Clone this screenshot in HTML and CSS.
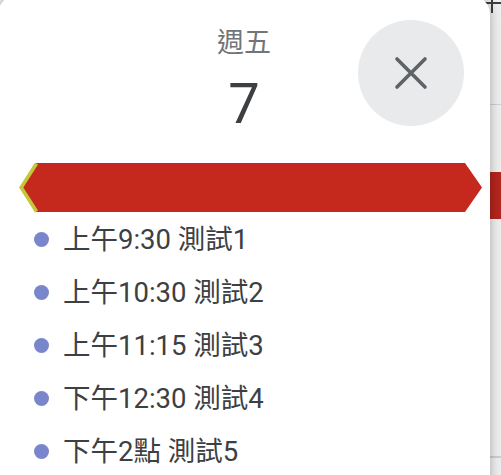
FILE: index.html
```html
<!DOCTYPE html>
<html lang="zh-Hant">
<head>
<meta charset="utf-8">
<link rel="stylesheet" href="styles.css">
</head>
<body>
<div class="backdrop">
  <div class="bd-head">
    <svg class="bd-plus" width="20" height="16" viewBox="0 0 20 16"><path d="M9 0V13M0 3H20" stroke="#3c4043" stroke-width="2" fill="none"/></svg>
  </div>
  <div class="bd-event"></div>
  <div class="bd-body"></div>
</div>

<div class="card">
  <div class="head">
    <div class="dow">週五</div>
    <div class="date">7</div>
  </div>
  <button class="close" aria-label="關閉">
    <svg width="34" height="34" viewBox="0 0 34 34"><path d="M3 3L31 31M31 3L3 31" stroke="#5f6368" stroke-width="3.6" stroke-linecap="round" fill="none"/></svg>
  </button>
  <div class="bar">
    <svg width="466" height="50" viewBox="0 0 466 50">
      <polygon points="17,0 446,0 463,24.5 446,49 17,49 1,24.5" fill="#c5291e"/>
      <polyline points="17.5,0.5 2.2,24.5 17.5,48.5" stroke="#c3c83a" stroke-width="3.6" fill="none"/>
    </svg>
  </div>
  <ul class="list">
    <li class="item"><span class="dot"></span><span class="txt">上午9:30 測試1</span></li>
    <li class="item"><span class="dot"></span><span class="txt">上午10:30 測試2</span></li>
    <li class="item"><span class="dot"></span><span class="txt">上午11:15 測試3</span></li>
    <li class="item"><span class="dot"></span><span class="txt">下午12:30 測試4</span></li>
    <li class="item"><span class="dot"></span><span class="txt">下午2點 測試5</span></li>
  </ul>
</div>
</body>
</html>
```

FILE: styles.css
```css
html, body {
  margin: 0;
  padding: 0;
}
body {
  width: 501px;
  height: 475px;
  overflow: hidden;
  position: relative;
  background: #ffffff;
  font-family: Roboto, "Noto Sans CJK TC", sans-serif;
}
.backdrop {
  padding-left: 482px;
  height: 475px;
  box-sizing: border-box;
  background: #f1f1f1;
}
.bd-head {
  height: 105px;
  border-bottom: 1px solid #d0d2d6;
  box-sizing: border-box;
}
.bd-plus {
  display: block;
  margin-left: 1px;
}
.bd-event {
  margin-top: 67px;
  height: 47px;
  background: #b5261e;
}
.bd-body {
  height: 237px;
  border-bottom: 2px solid #cfd1d5;
}
.card {
  position: absolute;
  left: -2px;
  top: -4px;
  width: 492px;
  height: 500px;
  background: #ffffff;
  border-radius: 18px;
  box-shadow: 0 0 14px 2px rgba(0,0,0,.18), 0 2px 6px rgba(0,0,0,.12);
}
.head {
  display: flex;
  flex-direction: column;
  align-items: center;
  padding-top: 31px;
}
.dow {
  font-size: 27px;
  line-height: 32px;
  color: #70757a;
}
.date {
  margin-top: 13px;
  font-size: 56px;
  line-height: 64px;
  color: #3c4043;
}
.close {
  position: absolute;
  left: 360px;
  top: 24px;
  width: 106px;
  height: 106px;
  border: 0;
  padding: 0;
  border-radius: 50%;
  background: #e9eaec;
  display: flex;
  align-items: center;
  justify-content: center;
}
.bar {
  margin-top: 27px;
  padding-left: 21px;
  height: 50px;
}
.bar svg {
  display: block;
}
.list {
  list-style: none;
  margin: 0;
  padding: 0;
}
.item {
  display: flex;
  align-items: center;
  height: 53px;
  padding-left: 36px;
}
.dot {
  width: 15px;
  height: 15px;
  border-radius: 50%;
  background: #7986cb;
  margin-right: 14px;
  flex: none;
}
.txt {
  font-size: 27.5px;
  line-height: 53px;
  color: #3c4043;
}
```
